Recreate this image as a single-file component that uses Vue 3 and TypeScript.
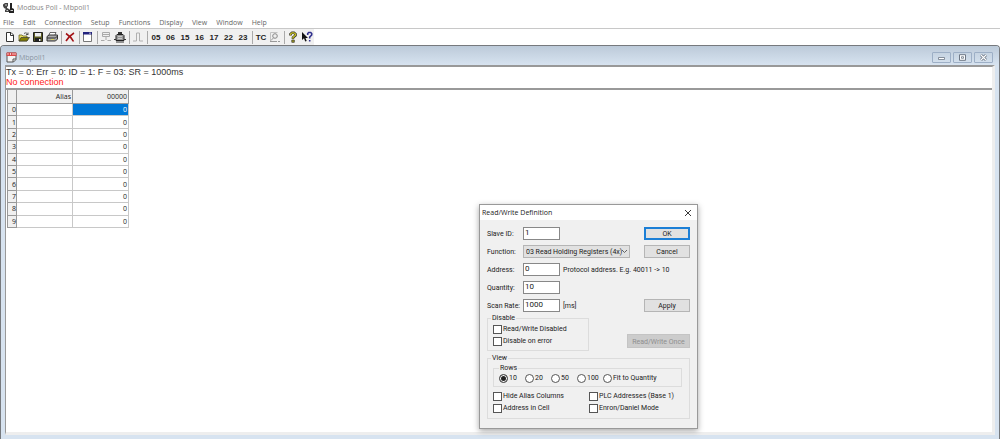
<script setup lang="ts">
import { ref } from 'vue'

const menus = ['File', 'Edit', 'Connection', 'Setup', 'Functions', 'Display', 'View', 'Window', 'Help']
const codes = ['05', '06', '15', '16', '17', '22', '23']
const registers = ref<number[]>(Array.from({ length: 10 }, () => 0))
const selected = ref(0)

const slaveId = ref('1')
const fn = ref('03')
const address = ref('0')
const quantity = ref('10')
const scanRate = ref('1000')
const rowOptions = ['10', '20', '50', '100', 'Fit to Quantity']
const rows = ref('10')
</script>

<template>
  <div class="app">
    <header class="titlebar">
      <svg class="logo" viewBox="0 0 12 12" aria-hidden="true">
        <path d="M0 2.500L2 1h3v3l-1 1v1l2 1v3H2V8l1-1-2-1-1-2z" fill="#444" />
        <path d="M7 1h2v5l2 1v4H6V8l1-1z" fill="#222" />
        <path d="M2 3h2M7.500 8.500H10M3.500 8.500H5" stroke="#ccc" />
      </svg>
      <span>Modbus Poll - Mbpoll1</span>
    </header>

    <nav class="menu">
      <button v-for="m in menus" :key="m" type="button">{{ m }}</button>
    </nav>

    <div class="toolbar-row">
      <div class="toolbar">
        <button type="button" aria-label="New">
          <svg viewBox="0 0 12 12"><path d="M2.500 1.500h4.500l2.500 2.500v6.500h-7z" fill="#fff" stroke="#333" /><path d="M6.500 1.500v3h3" fill="none" stroke="#333" /></svg>
        </button>
        <button type="button" aria-label="Open">
          <svg viewBox="0 0 12 12"><path d="M1 4h3l1 1h4v5H1z" fill="#e8dc60" stroke="#55500c" stroke-width=".7" /><path d="M1 10l2-3.500h8.500L9 10z" fill="#858000" stroke="#333" stroke-width=".7" /><path d="M6 2.500c2-1.500 3 0 4 1m0-2v2H8" fill="none" stroke="#333" stroke-width=".8" /></svg>
        </button>
        <button type="button" aria-label="Save">
          <svg viewBox="0 0 12 12"><path d="M1.500 1.500h9v9h-9z" fill="#5c5c20" stroke="#222" /><path d="M3 2h6v3.500H3z" fill="#eee" /><path d="M3 7h6v4H3z" fill="#222" /><path d="M7 8h1.500v2H7z" fill="#eee" /></svg>
        </button>
        <button type="button" aria-label="Print">
          <svg viewBox="0 0 12 12"><path d="M4 1.500h6L8.500 5h-6z" fill="#fff" stroke="#444" stroke-width=".8" /><path d="M1 5.500L3 4h8.500v4L9.500 10H1z" fill="#aaa" stroke="#333" /><path d="M1 7h8.500l2-2" fill="none" stroke="#333" /><path d="M5 8.500h3" stroke="#d9d35a" /></svg>
        </button>
        <i class="sep"></i>
        <button type="button" aria-label="Delete">
          <svg viewBox="0 0 12 12"><path d="M2 2.500c3 2 6 5 7.500 8M10 2C6.500 4 4 7 2 10" fill="none" stroke="#a31216" stroke-width="1.600" /></svg>
        </button>
        <i class="sep"></i>
        <button type="button" aria-label="Definition">
          <svg viewBox="0 0 12 12"><path d="M1.500 1.500h8v9h-8z" fill="#fff" stroke="#777" /><path d="M1 1h9v2.500H1z" fill="#23237f" /><path d="M7 2.200h2" stroke="#ddd" stroke-width=".8" /></svg>
        </button>
        <i class="sep"></i>
        <button type="button" aria-label="Connect" disabled>
          <svg viewBox="0 0 12 12"><path d="M2.500 1.500h7v4h-7zM3 3.500h6M6 6v3M1 9.500h3.500M7.500 9.500H11" fill="none" stroke="#aaa" /></svg>
        </button>
        <button type="button" aria-label="Poll">
          <svg viewBox="0 0 12 12"><path d="M4 1h4v2H4z" fill="#333" /><path d="M3 3.500h6l1 1v5H2v-5z" fill="#999" stroke="#222" /><path d="M4 5.500h4M4 7.500h4" stroke="#ddd" stroke-width=".7" /><path d="M0 8.500h2M10 8.500h2M2 11h8" stroke="#333" /></svg>
        </button>
        <i class="sep"></i>
        <button type="button" aria-label="Pulse" disabled>
          <svg viewBox="0 0 12 12"><path d="M1 10h3.500V2h3v8H11" fill="none" stroke="#b0b0b0" /></svg>
        </button>
        <i class="sep"></i>
        <div class="codes">
          <button v-for="c in codes" :key="c" type="button">{{ c }}</button>
        </div>
        <i class="sep"></i>
        <button type="button" class="tc">TC</button>
        <button type="button" aria-label="Traffic" disabled>
          <svg viewBox="0 0 12 12"><path d="M1.500 10V1.500h7" fill="none" stroke="#c2c2c2" /><circle cx="6" cy="5" r="2.300" fill="#eee" stroke="#888" /><path d="M4.500 6.800L2 9.500M1 10.500h7M9 10.500h2" stroke="#999" /></svg>
        </button>
        <i class="sep"></i>
        <button type="button" aria-label="About">
          <svg viewBox="0 0 12 12"><path d="M3.500 4.500V3L5 1.800h2L8.500 3v1.500L6 6.500V8" fill="none" stroke="#333" stroke-width="2.600" /><path d="M3.500 4.200V3L5 1.800h2L8.500 3v1.200L6 6.200v1.500" fill="none" stroke="#c9c322" stroke-width="1.300" /><path d="M4.800 9h2.500v2.300H4.800z" fill="#aaa51b" stroke="#333" stroke-width=".7" /></svg>
        </button>
        <button type="button" aria-label="Context help">
          <svg viewBox="0 0 12 12"><path d="M1 1v8l2-1.700L4.200 10.500l1.500-.6L4.500 7H7z" fill="#111" /><path d="M6.700 4V2.500L7.700 1.500h2l1 1V4L8.700 6v1.500M8.700 9v1.600" fill="none" stroke="#30308e" stroke-width="1.600" /></svg>
        </button>
      </div>
    </div>

    <main class="child">
      <div class="child-title">
        <svg class="doc" viewBox="0 0 11 11" aria-hidden="true">
          <path d="M1 1h9v6.500L7.500 10H1z" fill="#f4f4f4" stroke="#555" />
          <path d="M.5.5h10V4H.5z" fill="#d94848" />
          <path d="M2 1v2M4.500 1v2M7 1v2M9 1v2" stroke="#fff" stroke-width=".7" />
          <path d="M7 10V7h3" fill="none" stroke="#555" />
        </svg>
        <span class="child-name">Mbpoll1</span>
        <button type="button" class="wbtn" aria-label="Minimize">
          <svg viewBox="0 0 9 7"><path d="M1.500 3.500h6v2h-6z" fill="#fff" stroke="#6d7785" stroke-width=".8" /></svg>
        </button>
        <button type="button" class="wbtn" aria-label="Maximize">
          <svg viewBox="0 0 9 7"><path d="M1.500.7h6v5.600h-6z" fill="#fff" stroke="#6d7785" /><path d="M3.500 2.700h2v1.600h-2z" fill="#fff" stroke="#6d7785" stroke-width=".8" /></svg>
        </button>
        <button type="button" class="wbtn" aria-label="Close">
          <svg viewBox="0 0 9 7"><path d="M2 1l5 5M7 1L2 6" stroke="#687280" stroke-width="2.600" /><path d="M2 1l5 5M7 1L2 6" stroke="#fff" stroke-width="1.100" /></svg>
        </button>
      </div>

      <div class="client">
        <div class="status">
          <div>Tx = 0: Err = 0: ID = 1: F = 03: SR = 1000ms</div>
          <div class="error">No connection</div>
        </div>
        <table class="grid">
          <thead>
            <tr><th class="num"></th><th class="alias">Alias</th><th class="value">00000</th></tr>
          </thead>
          <tbody>
            <tr v-for="(v, i) in registers" :key="i">
              <th class="num" scope="row">{{ i }}</th>
              <td></td>
              <td :class="{ selected: selected === i }" @click="selected = i">{{ v }}</td>
            </tr>
          </tbody>
        </table>
      </div>
    </main>

    <form class="dialog" role="dialog" aria-labelledby="dlg-title" @submit.prevent>
      <div class="dialog-title">
        <span id="dlg-title">Read/Write Definition</span>
        <button type="button" class="close" aria-label="Close">
          <svg viewBox="0 0 8 8"><path d="M1 1l6 6M7 1L1 7" stroke="#222" stroke-width=".9" /></svg>
        </button>
      </div>
      <div class="dialog-body">
        <div class="line">
          <label for="slave">Slave ID:</label>
          <input id="slave" v-model="slaveId" class="text" type="text" />
          <button type="submit" class="btn default">OK</button>
        </div>
        <div class="line">
          <label for="fn">Function:</label>
          <div class="combo">
            <select id="fn" v-model="fn"><option value="03">03 Read Holding Registers (4x)</option></select>
            <svg viewBox="0 0 7 5" aria-hidden="true"><path d="M1 1l2.500 2.500L6 1" fill="none" stroke="#555" stroke-width=".9" /></svg>
          </div>
          <button type="button" class="btn">Cancel</button>
        </div>
        <div class="line">
          <label for="addr">Address:</label>
          <input id="addr" v-model="address" class="text" type="text" />
          <span class="hint">Protocol address. E.g. 40011 -&gt; 10</span>
        </div>
        <div class="line">
          <label for="qty">Quantity:</label>
          <input id="qty" v-model="quantity" class="text" type="text" />
        </div>
        <div class="line">
          <label for="rate">Scan Rate:</label>
          <input id="rate" v-model="scanRate" class="text" type="text" />
          <span class="hint">[ms]</span>
          <button type="button" class="btn">Apply</button>
        </div>

        <div class="disable-row">
          <fieldset class="disable">
            <legend>Disable</legend>
            <label class="opt"><input type="checkbox" />Read/Write Disabled</label>
            <label class="opt"><input type="checkbox" />Disable on error</label>
          </fieldset>
          <button type="button" class="btn once" disabled>Read/Write Once</button>
        </div>

        <fieldset class="view">
          <legend>View</legend>
          <fieldset class="rows">
            <legend>Rows</legend>
            <div class="radios">
              <label v-for="r in rowOptions" :key="r" class="opt">
                <input v-model="rows" type="radio" name="rows" :value="r" />{{ r }}
              </label>
            </div>
          </fieldset>
          <div class="checks">
            <label class="opt"><input type="checkbox" />Hide Alias Columns</label>
            <label class="opt"><input type="checkbox" />PLC Addresses (Base 1)</label>
            <label class="opt"><input type="checkbox" />Address in Cell</label>
            <label class="opt"><input type="checkbox" />Enron/Daniel Mode</label>
          </div>
        </fieldset>
      </div>
    </form>
  </div>
</template>

<style>
body {
  margin: 0;
  background: #fff;
}
</style>

<style scoped>
.app,
.app * {
  box-sizing: border-box;
}
.app {
  position: relative;
  display: flex;
  flex-direction: column;
  min-height: 100vh;
  overflow: hidden;
  background: #fff;
  color: #222;
  font-family: "Open Sans", "Noto Sans", sans-serif;
  font-size: 7px;
}
button,
input,
select {
  margin: 0;
  padding: 0;
  color: inherit;
  font: inherit;
}
button {
  border: 0;
  background: none;
}
svg {
  display: block;
}
.titlebar {
  display: flex;
  align-items: center;
  gap: 2px;
  height: 15px;
  padding-left: 3px;
  color: #888;
}
.logo {
  width: 12px;
  height: 12px;
}
.menu {
  display: flex;
  gap: 9px;
  height: 14px;
  padding-left: 3px;
  border-bottom: 1px solid #c8c8c8;
  color: #666;
}
.menu button {
  line-height: 16px;
}
.toolbar-row {
  display: flex;
  height: 16px;
}
.toolbar {
  display: flex;
  align-items: center;
  padding-left: 3px;
  background: #f0f0f0;
}
.toolbar button {
  display: flex;
  align-items: center;
  justify-content: center;
  width: 14px;
  height: 14px;
}
.toolbar svg {
  width: 12px;
  height: 12px;
}
.sep {
  width: 1px;
  height: 13px;
  margin: 0 1px 0 2px;
  background: #aaa;
}
.codes {
  display: flex;
  justify-content: space-between;
  width: 101px;
}
.codes button,
.toolbar .tc {
  color: #222;
  font: bold 8px "Liberation Sans", Arial, sans-serif;
}
.child {
  display: flex;
  flex: 1;
  flex-direction: column;
  padding: 0 4px 4px;
  border: 1px solid #76797d;
  border-bottom: 0;
  border-radius: 4px 4px 0 0;
  background: #d7e3f0;
}
.child-title {
  display: flex;
  align-items: center;
  gap: 2px;
  height: 19px;
  margin: 0 -4px;
  padding: 4px 6px 0 5px;
  border-radius: 3px 3px 0 0;
  background: linear-gradient(#bccad9, #d7e3f0);
  color: #8b95a1;
}
.doc {
  width: 11px;
  height: 11px;
}
.child-name {
  flex: 1;
}
.wbtn {
  display: flex;
  align-items: center;
  justify-content: center;
  width: 19px;
  height: 11px;
  border: 1px solid #9dafc6;
  border-radius: 1px;
}
.wbtn svg {
  width: 9px;
  height: 7px;
}
.client {
  flex: 1;
  border: solid #eee;
  border-width: 2px 3px 3px 1px;
  border-top-color: #999;
  border-left-color: #999;
  background: #fff;
}
.status {
  height: 23px;
  border-bottom: 2px solid #999;
  color: #333;
  font: 9px/10px "Liberation Sans", Arial, sans-serif;
}
.error {
  color: #f22;
}
.grid {
  height: 138px;
  margin-left: 1px;
  border-left: 1px solid #999;
  border-spacing: 0;
  border-collapse: separate;
  table-layout: fixed;
  width: 122px;
  line-height: 9px;
}
.grid th,
.grid td {
  padding: 0 1px 0 0;
  border: solid #c8c8c8;
  border-width: 0 1px 1px 0;
  font-weight: 400;
  text-align: right;
}
.grid th {
  border-color: #999;
  background: #f0f0f0;
}
.grid thead th {
  height: 14px;
}
.grid .num {
  width: 9px;
  padding: 0;
}
.grid .alias,
.grid .value {
  width: 56px;
}
.grid .selected {
  background: #0078d7;
  color: #fff;
}
.dialog {
  position: absolute;
  top: 204px;
  left: 479px;
  width: 219px;
  border: 1px solid #999;
  background: #f0f0f0;
  box-shadow: 0 2px 6px rgba(0, 0, 0, 0.35);
  font: 7px/8px Roboto, "Liberation Sans", sans-serif;
}
.dialog-title {
  display: flex;
  align-items: center;
  justify-content: space-between;
  height: 15px;
  padding: 0 5px 0 2px;
  background: #fff;
  font-family: "Open Sans", "Noto Sans", sans-serif;
}
.close svg {
  width: 8px;
  height: 8px;
}
.dialog-body {
  padding: 4px 7px 9px;
}
.line {
  display: flex;
  align-items: center;
  height: 18px;
}
.line label {
  width: 36px;
  padding-top: 2px;
  white-space: nowrap;
}
.text {
  width: 37px;
  height: 13px;
  padding: 0 1px 1px;
  border: 1px solid #888;
  background: #fff;
  font-size: 8px;
}
.hint {
  margin-left: 3px;
  padding-top: 2px;
  white-space: nowrap;
}
.btn {
  width: 46px;
  height: 13px;
  margin-left: auto;
  padding-top: 1px;
  border: 1px solid #b5b5b5;
  background: #e1e1e1;
  white-space: nowrap;
}
.btn.default {
  border: 2px solid #1c7fd6;
}
.combo {
  display: grid;
  align-items: center;
  width: 107px;
}
.combo select,
.combo svg {
  grid-area: 1 / 1;
}
.combo select {
  width: 100%;
  height: 13px;
  padding: 1px 0 0 2px;
  border: 1px solid #b5b5b5;
  border-radius: 0;
  background: #e1e1e1;
  appearance: none;
}
.combo svg {
  justify-self: end;
  width: 7px;
  height: 5px;
  margin-right: 2px;
  pointer-events: none;
}
fieldset {
  min-width: 0;
  margin: 0;
  border: 1px solid #dcdcdc;
}
legend {
  padding: 0 1px;
}
.disable-row {
  display: flex;
  align-items: flex-end;
}
.disable {
  width: 102px;
  height: 37px;
  padding: 1px 5px 0;
}
.disable legend,
.view > legend {
  margin-left: -2px;
}
.btn.once {
  width: 63px;
  height: 14px;
  margin-bottom: 3px;
  border-color: #c4c4c4;
  background: #ccc;
  color: #8e8e8e;
}
.view {
  height: 65px;
  margin-top: 3px;
  padding: 2px 5px 0;
}
.rows {
  height: 23px;
  margin-right: 2px;
  padding: 0 0 0 5px;
}
.opt {
  display: flex;
  align-items: center;
  gap: 1px;
  height: 12px;
  white-space: nowrap;
}
.opt input {
  flex: none;
  width: 9px;
  height: 9px;
  border: 1px solid #555;
  background: #fff;
  appearance: none;
}
.opt input[type="checkbox"]:checked {
  background: #333;
  box-shadow: inset 0 0 0 1px #fff;
}
.opt input[type="radio"] {
  border-radius: 50%;
}
.opt input[type="radio"]:checked {
  background: #222;
  box-shadow: inset 0 0 0 1px #fff;
}
.radios {
  display: grid;
  grid-template-columns: repeat(4, 26px) auto;
}
.checks {
  display: grid;
  grid-template-columns: 96px auto;
  margin-top: 3px;
}
</style>
